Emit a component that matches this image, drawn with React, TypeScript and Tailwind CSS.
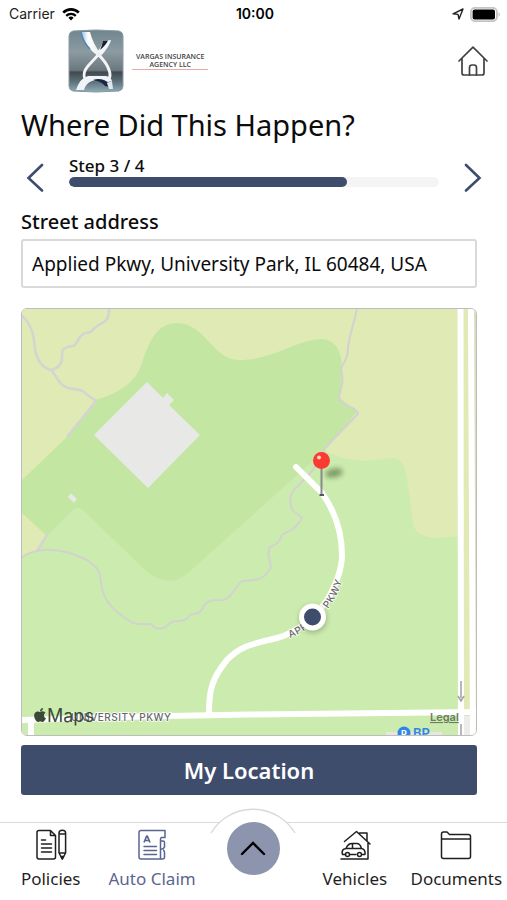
import { useState } from 'react'
import { FaApple } from 'react-icons/fa'

const FOREST = 'M21 481 L67 437 L95 400 Q132 390 141 366 C148 345 155 323 177 323 C208 324 212 362 242 360 C275 359 298 339 322 339 C341 341 342 360 342 370 L340 398 L357 412 L325 450 L306 467 L188 573 Q168 590 145 570 L84 511 Q78 504 72 511 L47 536 L21 512 Z'

const SHORT_ROAD = 'M209 713 C209 690 212 678 227 660 C240 646 252 644 277 638 C300 632 316 614 326 602 C336 585 342 570 342 555 C342 530 334 510 322 493 L296 467'

function WifiIcon() {
    return (
        <svg viewBox="0 0 20 14" className="h-[14px] w-5" aria-hidden="true">
            <path d="M2.2 5.6 a11 11 0 0 1 15.6 0" fill="none" stroke="#000" strokeWidth="2.6" />
            <path d="M5.2 8.8 a7 7 0 0 1 9.6 0" fill="none" stroke="#000" strokeWidth="2.3" />
            <path d="M7.4 10.8 a3.8 3.8 0 0 1 5.2 0 L10 13.6 Z" fill="#000" />
        </svg>
    )
}

function StatusBar() {
    return (
        <div className="grid grid-cols-3 items-center h-7 pl-[9px] pr-[6px] font-[Inter,sans-serif] text-sm text-[#222]">
            <div className="flex items-center gap-[6px]">
                <span>Carrier</span>
                <WifiIcon />
            </div>
            <span className="text-center font-semibold text-black">10:00</span>
            <div className="flex items-center justify-end gap-[6px]">
                <svg viewBox="0 0 12 12" className="size-3" aria-hidden="true">
                    <path d="M1 5.8 L11 1 L7 11 L6 6.4 Z" fill="none" stroke="#222" strokeWidth="1.4" strokeLinejoin="round" />
                </svg>
                <svg viewBox="0 0 31 15" className="h-[15px] w-[31px]" aria-hidden="true">
                    <rect x="0.9" y="0.9" width="26" height="13.2" rx="4" fill="#fff" stroke="#c4c4c4" strokeWidth="1.8" />
                    <rect x="2.6" y="2.6" width="22.4" height="9.8" rx="2" fill="#000" />
                    <path d="M28.6 5 Q31 7.5 28.6 10 Z" fill="#b9b9b9" />
                </svg>
            </div>
        </div>
    )
}

function AgencyLogo() {
    return (
        <svg viewBox="0 0 56 64" className="h-16 w-14" role="img" aria-label="Agency logo">
            <defs>
                <linearGradient id="plate" x1="0" y1="0" x2="0" y2="1">
                    <stop offset="0" stopColor="#71858e" />
                    <stop offset="0.35" stopColor="#8c9ba2" />
                    <stop offset="0.65" stopColor="#6b777d" />
                    <stop offset="0.68" stopColor="#40494e" />
                    <stop offset="0.85" stopColor="#627680" />
                    <stop offset="1" stopColor="#8fadb8" />
                </linearGradient>
                <linearGradient id="chrome" x1="0" y1="0" x2="1" y2="0">
                    <stop offset="0" stopColor="#8fbbe0" />
                    <stop offset="0.35" stopColor="#ffffff" />
                    <stop offset="1" stopColor="#e6ebf0" />
                </linearGradient>
            </defs>
            <path d="M5 2 Q28 0 51 2 Q55 3 55 7 V57 Q55 61 51 62 Q28 64 5 62 Q1 61 1 57 V7 Q1 3 5 2 Z" fill="url(#plate)" stroke="#8a9aa3" />
            {/* Loop and ribbons */}
            <path d="M31 25 L20 37 Q14 44 17 50" fill="none" stroke="#f3f5f8" strokeWidth="2.8" />
            <path d="M29 24 Q39 34 41 41 Q43 46 41 50" fill="none" stroke="#f3f5f8" strokeWidth="3" />
            <path d="M35 12 L43 11 Q42 17 32 28 L28 24 Q34 18 35 12 Z" fill="#f4f7fa" />
            <path d="M35 12 L40 11.5 Q38 16 32 21 Q34 17 35 12 Z" fill="#17202d" />
            <path d="M13 3 L22 3 Q25 15 33 25 L31 28 Q16 17 13 3 Z" fill="url(#chrome)" />
            <path d="M13 3 Q15 13 22 20" fill="none" stroke="#4f87b8" strokeWidth="1.4" />
            {/* Base */}
            <path d="M8 61 Q12 49 20 47 L38 47 Q43 48 44 52 L40 53 Q32 49 24 52 Q18 54 16 61 Z" fill="#f1f4f7" />
            <path d="M25 51 Q32 48.5 38 52 L42 58 L37 57 Q34 52.5 25 51 Z" fill="#1b2645" />
            <path d="M39 54 L44 52 L45 60 L41 60 Z" fill="#dfe7ee" />
        </svg>
    )
}

function HomeIcon() {
    return (
        <svg viewBox="0 0 30 30" className="size-[30px]" fill="none" stroke="#3f4144" strokeWidth="1.7" strokeLinecap="round" strokeLinejoin="round" aria-hidden="true">
            <path d="M1 15 L15 1.2 L29 15 M4 12.5 V27 Q4 29 6 29 H24 Q26 29 26 27 V12.5" />
            <path d="M11.5 29 V21.5 Q11.5 19 14 19 H16 Q18.5 19 18.5 21.5 V29" />
        </svg>
    )
}

function LocationMap() {
    return (
        <svg viewBox="22 309 454 426" className="block w-full font-[Inter,sans-serif]" role="img" aria-label="Map of Applied Pkwy">
            <defs>
                <path id="road-label" d="M290 638 C308 631 322 618 331 605 C341 589 346 575 347 550" />
                <filter id="soft" x="-50%" y="-50%" width="200%" height="200%">
                    <feGaussianBlur stdDeviation="2.4" />
                </filter>
            </defs>

            {/* Ground */}
            <rect x="21" y="308" width="457" height="428" fill="#ccebae" />
            <path d="M21 308 H478 V715 H464 V536 L436 538 Q416 537 413 524 L407 478 Q404 457 390 458 Q350 466 325 450 L200 420 L21 481 Z" fill="#e0eab5" />
            <path d="M21 511 L47 535 L38 551 L21 557 Z" fill="#e0eab5" />
            <path d={FOREST} fill="#c3e6a3" />
            <rect x="474" y="308" width="4" height="400" fill="#d9dfbe" />

            {/* Buildings */}
            <path d="M147 382 L163 398 L167 393 L174 400 L169 405 L200 435 L148 488 L94 435 Z" fill="#e8e8e7" />
            <path d="M68 497 L71 493.5 L77 499 L74 503 Z" fill="#e8e8e7" />

            {/* Trails */}
            <g fill="none" stroke="#d4d4d0" strokeWidth="2.6" strokeLinejoin="round">
                <path d="M21 315 Q32 324 34 340 Q35 366 51 370 C58 377 58 385 68 388 C78 390 82 389 86 394 L96 401 L67 437" />
                <path d="M109 308 C110 322 102 323 97 326 C91 330 93 333 85 333 C77 336 79 344 73 346 Q62 347 62 353 C63 362 60 368 51 370" />
                <path d="M37 551 L47 535" />
            </g>
            <g fill="none" stroke="#d2d2cf" strokeWidth="2" strokeLinejoin="round">
                <path d="M357 308 C354 325 349 335 348 348 C348 362 342 362 341 370 C345 382 340 390 339 398 C340 407 356 405 358 414 L325 448 L313 470 L294 490 Q287 499 293 511 Q300 515 302 518 C294 532 288 530 282 535 C279 543 277 544 270 547 C265 557 273 562 270 569 C263 581 255 580 242 581 C235 585 233 599 222 600 C210 600 208 600 204 606 C199 616 195 613 190 615 C185 624 176 619 170 623 Q160 634 151 624 Q142 625 133 623 C114 612 102 600 101 582 C100 570 97 567 87 560 Q59 546 37 551 Q27 553 21 558" />
            </g>

            {/* Roads */}
            <rect x="464" y="716" width="7" height="20" fill="#ececea" />
            <g fill="none" stroke="#fff" strokeWidth="6">
                <path d="M460.5 308 L461 736" />
                <path d="M471 308 L473 736" />
                <path d="M21 720 L140 716.5 L250 714.5 L478 712" />
                <path d="M31 720 V736" />
                <path d={SHORT_ROAD} strokeLinecap="round" />
            </g>
            <path d="M386 736 V732 H442 V736 Z" fill="#e6e8de" />
            <path d="M461 681 V698 M458 696 L461 701 L464 696" fill="none" stroke="#a9a5a5" strokeWidth="1.6" />
            <path d="M461 724 V735" stroke="#a9a5a5" strokeWidth="1.6" />

            {/* Road names */}
            <g fill="#68686b" stroke="#fff" strokeWidth="1.5" paintOrder="stroke" fontSize="10" fontWeight="500" className="tracking-wider">
                <text>
                    <textPath href="#road-label">APPLIED PKWY</textPath>
                </text>
                <text x="71" y="721">UNIVERSITY PKWY</text>
            </g>
            <circle cx="404" cy="733" r="6.5" fill="#2f86e6" />
            <text x="404" y="737" fontSize="9" fontWeight="700" fill="#fff" textAnchor="middle">P</text>
            <text x="413" y="738" fontSize="13" fontWeight="600" fill="#2f86e6">BP</text>

            {/* Attribution */}
            <FaApple x={32} y={707} size={16} color="#3b4a38" />
            <text x="47" y="722" fontSize="18" fill="#3b4a38">Maps</text>
            <text x="430" y="721" fontSize="11" fontWeight="600" fill="#6c7b63" textDecoration="underline">Legal</text>

            {/* Current position */}
            <circle cx="313" cy="619" r="14" fill="#5d7352" opacity="0.4" filter="url(#soft)" />
            <circle cx="312.5" cy="617" r="13.5" fill="#fff" />
            <circle cx="312.5" cy="617" r="8.5" fill="#3f4d6d" />

            {/* Dropped pin */}
            <ellipse cx="334" cy="473" rx="9" ry="4.5" fill="#4d6b39" opacity="0.6" filter="url(#soft)" transform="rotate(-12 334 473)" />
            <path d="M321.5 466 V494" stroke="#8a8a8c" strokeWidth="2" />
            <path d="M319.5 495 H324" stroke="#55565c" strokeWidth="2" />
            <circle cx="321.5" cy="460.5" r="8.5" fill="#fb3a30" />
            <circle cx="319" cy="457.5" r="2" fill="#ffd2cc" />
        </svg>
    )
}

function PoliciesIcon() {
    return (
        <svg viewBox="0 0 32 32" className="size-8" fill="none" stroke="currentColor" strokeWidth="1.5" strokeLinecap="round" strokeLinejoin="round" aria-hidden="true">
            <path d="M15.5 1.5 H4 Q2 1.5 2 3.5 V28 Q2 30 4 30 H18.5 Q20.5 30 20.5 28 V6.5 Z M15.5 1.5 V6.5 H20.5" />
            <path d="M6.5 11 H10.5 M6.5 15 H16.5 M6.5 19 H16.5 M6.5 23 H16.5" />
            <path d="M24 24 V4 Q24 1.2 27.3 1.2 Q30.6 1.2 30.6 4 V24 L27.3 30 Z M24 5 H30.6 M24 24 H30.6" />
            <path d="M26 27.5 H28.6 L27.3 30 Z" fill="currentColor" />
        </svg>
    )
}

function ClaimIcon() {
    return (
        <svg viewBox="0 0 32 32" className="size-8" fill="none" stroke="currentColor" strokeWidth="1.5" strokeLinejoin="round" aria-hidden="true">
            <path d="M25 8.5 H29 V1.5 H5 Q3 1.5 3 3.5 V28 Q3 30 5 30 H24.5 V10 Q24.5 8.5 26 8.5" />
            <path d="M24.5 12 H27 Q28.5 12 28.5 13.5 V18 L27 20 H24.5 M27 21.5 Q28.5 21.5 28.5 23 V28 Q28.5 30 26.5 30 H24.5" />
            <path d="M8 13.5 L10.7 7 H11.3 L14 13.5 M9 11.5 H13" strokeWidth="1.7" />
            <path d="M8 17.5 H20.5 M8 21.5 H20.5 M8 25.5 H20.5" strokeLinecap="round" />
        </svg>
    )
}

function VehiclesIcon() {
    return (
        <svg viewBox="0 0 32 32" className="size-8" fill="none" stroke="currentColor" strokeWidth="1.5" strokeLinecap="round" strokeLinejoin="round" aria-hidden="true">
            <path d="M5.5 12.5 L17.5 2.5 L31 15 M20.5 5 V4 H28 V12 M29 14 V30 H2" />
            <path d="M6.5 25.5 H3.5 Q2 20 7 19.5 Q9 14.5 13 14.5 H18 Q21 14.5 22.5 19.5 Q26.5 20 26 25.5 H23.5 M11.5 25.5 H17 M7 19.5 H22.5 M13.5 14.5 V19.5" />
            <circle cx="8.5" cy="25.5" r="2" />
            <circle cx="20.5" cy="25.5" r="2" />
        </svg>
    )
}

function DocumentsIcon() {
    return (
        <svg viewBox="0 0 32 32" className="size-8" fill="none" stroke="currentColor" strokeWidth="1.5" strokeLinejoin="round" aria-hidden="true">
            <path d="M1.5 10 V5 Q1.5 3 3.5 3 H7 L9.5 5.5 H28.5 Q30.5 5.5 30.5 7.5 V27.5 Q30.5 29.5 28.5 29.5 H3.5 Q1.5 29.5 1.5 27.5 V10 H30.5" />
        </svg>
    )
}

function NavItem({ label, icon, active = false }: { label: string; icon: React.ReactNode; active?: boolean }) {
    return (
        <a
            href="#"
            aria-current={active ? 'page' : undefined}
            className={`flex flex-col items-center gap-1 whitespace-nowrap pt-[6px] ${active ? 'text-[#5a6691]' : 'text-[#1f1f1f]'}`}
        >
            {icon}
            <span className="text-[17px] leading-7">{label}</span>
        </a>
    )
}

export default function App() {
    const [address, setAddress] = useState('Applied Pkwy, University Park, IL 60484, USA')
    const step = 3
    const totalSteps = 4

    return (
        <div className="flex min-h-screen flex-col bg-white font-['Noto_Sans',sans-serif] text-[#0c0c0c]">
            <StatusBar />

            <header className="mt-px flex items-center justify-between pl-[68px] pr-[19px]">
                <div className="flex items-center gap-2">
                    <AgencyLogo />
                    <div className="border-b border-[#e8a9a9] px-1 text-center font-['Open_Sans',sans-serif] text-[7px] leading-[8px] font-semibold text-[#444]">
                        <p>VARGAS INSURANCE</p>
                        <p>AGENCY LLC</p>
                    </div>
                </div>
                <button type="button" aria-label="Home">
                    <HomeIcon />
                </button>
            </header>

            <main className="flex flex-col pl-[21px] pr-[30px]">
                <h1 className="mt-3 text-[29px] leading-10">Where Did This Happen?</h1>

                {/* Step progress */}
                <div className="-mr-[6px] mt-[5px] flex items-center justify-between">
                    <button type="button" aria-label="Previous step" className="pl-1 pt-3">
                        <svg viewBox="0 0 20 30" className="h-[30px] w-5" fill="none" stroke="#3f4d6d" strokeWidth="2.6" strokeLinecap="round" aria-hidden="true">
                            <path d="M17 3 L3.5 16 L17 28.5" />
                        </svg>
                    </button>
                    <div className="mx-6 flex-1">
                        <p className="text-[17px] leading-[22px] font-medium">Step {step} / {totalSteps}</p>
                        <div className="h-[10px] overflow-hidden rounded-full bg-[#f4f4f4]">
                            <div className="h-full rounded-full bg-[#3f4d6d]" style={{ width: `${(step / totalSteps) * 100}%` }} />
                        </div>
                    </div>
                    <button type="button" aria-label="Next step" className="pt-3">
                        <svg viewBox="0 0 20 30" className="h-[30px] w-5" fill="none" stroke="#3f4d6d" strokeWidth="2.6" strokeLinecap="round" aria-hidden="true">
                            <path d="M3 3 L16.5 16 L3 28.5" />
                        </svg>
                    </button>
                </div>

                <label htmlFor="address" className="mt-4 text-[20px] leading-7 font-medium">Street address</label>
                <input
                    id="address"
                    value={address}
                    onChange={e => setAddress(e.target.value)}
                    className="mt-[3px] h-[49px] w-full rounded-[3px] border-2 border-[#d9d9d9] px-[9px] text-[19px] outline-none"
                />

                <div className="mt-5 overflow-hidden rounded-md border border-[#bdbdbd]">
                    <LocationMap />
                </div>

                <button type="button" className="mt-[9px] h-[50px] rounded-[3px] bg-[#3f4d6d] text-[22px] font-semibold text-white">
                    My Location
                </button>
            </main>

            <nav className="mt-auto grid grid-cols-5 border-t border-[#d9d9d9] pb-[7px]">
                <NavItem label="Policies" icon={<PoliciesIcon />} />
                <NavItem label="Auto Claim" icon={<ClaimIcon />} active />
                <div className="relative flex justify-center">
                    <svg viewBox="0 0 86 26" className="absolute -top-[15px] h-[26px] w-[86px] max-w-none" aria-hidden="true">
                        <path d="M1 25 A49 49 0 0 1 85 25" fill="#fff" stroke="#d9d9d9" strokeWidth="1.4" />
                    </svg>
                    <button type="button" aria-label="Open menu" className="absolute -top-px flex size-[53px] items-center justify-center rounded-full bg-[#8d94ad]">
                        <svg viewBox="0 0 26 15" className="h-[15px] w-[26px]" fill="none" stroke="#000" strokeWidth="2.4" strokeLinecap="round" aria-hidden="true">
                            <path d="M2 13 L13 2 L24 13" />
                        </svg>
                    </button>
                </div>
                <NavItem label="Vehicles" icon={<VehiclesIcon />} />
                <NavItem label="Documents" icon={<DocumentsIcon />} />
            </nav>
        </div>
    )
}
